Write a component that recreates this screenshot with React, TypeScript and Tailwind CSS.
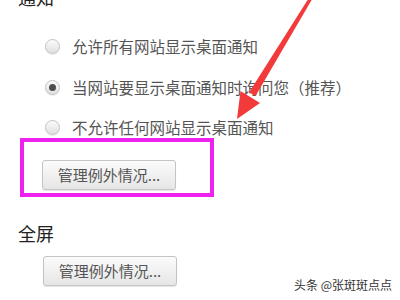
const font = { fontFamily: '"Noto Sans CJK SC", "Noto Sans", sans-serif' };

function Radio({ checked }: { checked?: boolean }) {
  return (
    <span className="flex h-[15px] w-[15px] shrink-0 items-center justify-center rounded-full border border-[#c2c2c2] bg-gradient-to-b from-[#fbfbfb] to-[#e0e0e0] shadow-[0_1px_1px_rgba(0,0,0,0.08)]">
      {checked && <span className="h-[7px] w-[7px] rounded-full bg-[#4d4d4d]" />}
    </span>
  );
}

function RadioRow({ label, checked, mt }: { label: string; checked?: boolean; mt: string }) {
  return (
    <div className={`flex h-[20px] items-center gap-[12px] pl-[27px] ${mt}`}>
      <Radio checked={checked} />
      <span className="whitespace-nowrap text-[15.5px] leading-[20px] text-[#555]">{label}</span>
    </div>
  );
}

function ManageButton() {
  return (
    <button className="flex h-[30px] w-[134px] items-center justify-center rounded-[3px] border border-[#c4c4c4] bg-gradient-to-b from-[#fbfbfb] to-[#e6e6e6] text-[15px] text-[#555] shadow-[0_1px_1px_rgba(0,0,0,0.1)]">
      管理例外情况...
    </button>
  );
}

function Arrow() {
  return (
    <svg className="pointer-events-none absolute left-0 top-0" width="400" height="300" viewBox="0 0 400 300">
      <polygon points="312.5,-1.5 309.5,-3 249,92.5 255.5,96" fill="#f23a3a" />
      <polygon points="237,119 240.5,91 260,103" fill="#f23a3a" />
    </svg>
  );
}

export default function App() {
  return (
    <div className="relative h-[300px] w-[400px] overflow-hidden bg-white" style={font}>
      <div className="flex flex-col pl-[18px]">
        <div className="-mt-[14px] h-[22px] text-[18px] leading-[22px] text-[#222]">通知</div>
        <RadioRow label="允许所有网站显示桌面通知" mt="mt-[28px]" />
        <RadioRow label="当网站要显示桌面通知时询问您（推荐）" checked mt="mt-[21px]" />
        <RadioRow label="不允许任何网站显示桌面通知" mt="mt-[20px]" />
        <div className="ml-[2px] mt-[1px] w-[194px] border-4 border-[#ee22ee] pb-[3px] pl-[18px] pt-[18px]">
          <ManageButton />
        </div>
        <div className="mt-[24px] h-[24px] text-[18px] leading-[24px] text-[#222]">全屏</div>
        <div className="ml-[25px] mt-[11px]">
          <ManageButton />
        </div>
      </div>
      <Arrow />
      <div className="absolute bottom-[8px] right-[8px] text-[12px] leading-[14px] text-[#333] [text-shadow:0_0_2px_#fff,0_0_2px_#fff]">
        头条 @张斑斑点点
      </div>
    </div>
  );
}
